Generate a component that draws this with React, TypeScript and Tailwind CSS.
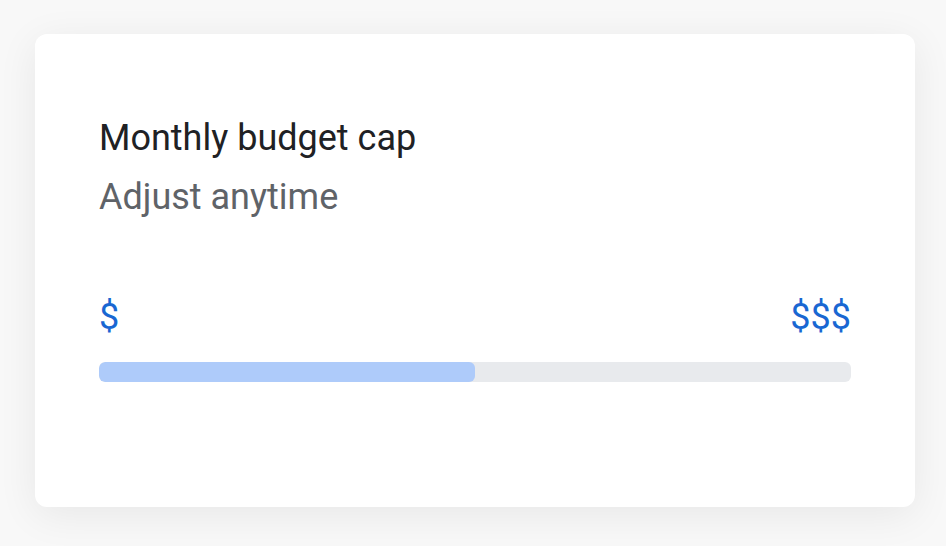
import React from "react";

export default function App() {
  return (
    <div className="w-[946px] h-[546px] bg-[#f8f8f8] pt-[34px] pl-[35px] overflow-hidden" style={{ fontFamily: "Roboto, 'Noto Sans', sans-serif" }}>
      <div className="w-[880px] h-[473px] bg-white rounded-[12px] shadow-[0_8px_40px_rgba(0,0,0,0.07)] px-[64px] pt-[82px] flex flex-col">
        <div className="text-[36px] leading-[44px] text-[#202124]">Monthly budget cap</div>
        <div className="text-[36px] leading-[44px] text-[#5f6368] mt-[15px]">Adjust anytime</div>
        <div className="flex justify-between items-center mt-[78px] text-[36px] leading-[40px] text-[#1967d2]">
          <span>$</span>
          <span>$$$</span>
        </div>
        <div className="mt-[25px] h-[20px] w-full rounded-[6px] bg-[#e8eaed] overflow-hidden">
          <div className="h-full w-1/2 rounded-[6px] bg-[#aecbfa]" />
        </div>
      </div>
    </div>
  );
}
